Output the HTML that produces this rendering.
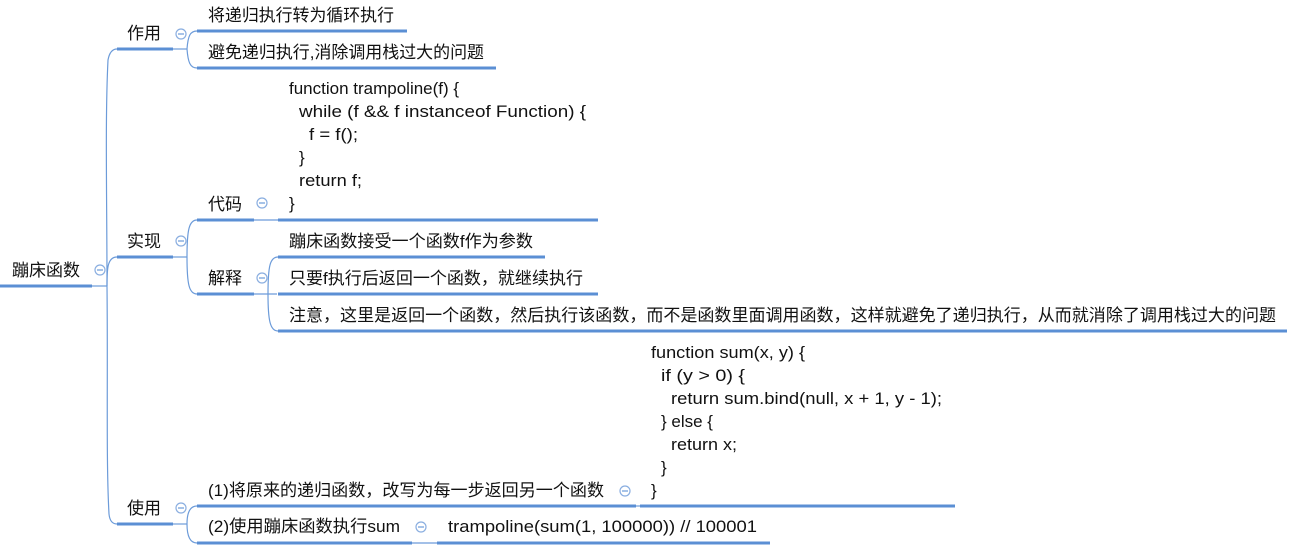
<!DOCTYPE html>
<html><head><meta charset="utf-8"><style>
html,body{margin:0;padding:0;background:#fff;}
svg{display:block;}
text{font-family:"Liberation Sans","Noto Sans CJK SC",sans-serif;font-size:17px;fill:#111;}
.t{stroke:#5b8fd4;stroke-width:3;fill:none;}
.n{stroke:#6c9bd9;stroke-width:1.2;fill:none;}
.c{stroke:#8aaee0;stroke-width:1.2;fill:#fff;}
</style></head><body>
<svg width="1311" height="549" xmlns="http://www.w3.org/2000/svg">
<line class="t" x1="0" y1="286" x2="92" y2="286"/>
<line class="n" x1="92" y1="286" x2="107" y2="286"/>
<text x="12" y="276" textLength="68" lengthAdjust="spacingAndGlyphs">蹦床函数</text>
<circle class="c" cx="100" cy="270" r="5"/><line class="n" x1="97" y1="270" x2="103" y2="270"/>
<path class="n" d="M107 286 C107 200 105 120 108 60 Q110 49 117 49"/>
<path class="n" d="M107 286 C107 270 107 257 117 257"/>
<path class="n" d="M107 286 C108 380 106 460 109 514 Q110 524 117 524"/>
<line class="t" x1="117" y1="49" x2="173" y2="49"/>
<line class="n" x1="173" y1="49" x2="187" y2="49"/>
<text x="127" y="39" textLength="34" lengthAdjust="spacingAndGlyphs">作用</text>
<circle class="c" cx="181" cy="34" r="5"/><line class="n" x1="178" y1="34" x2="184" y2="34"/>
<path class="n" d="M187 49 C188 36 190 31 197 31"/>
<path class="n" d="M187 49 C188 62 190 68 197 68"/>
<line class="t" x1="197" y1="31" x2="407" y2="31"/>
<line class="t" x1="197" y1="68" x2="496" y2="68"/>
<text x="208" y="21" textLength="186" lengthAdjust="spacingAndGlyphs">将递归执行转为循环执行</text>
<text x="208" y="58" textLength="276" lengthAdjust="spacingAndGlyphs">避免递归执行,消除调用栈过大的问题</text>
<line class="t" x1="117" y1="257" x2="173" y2="257"/>
<line class="n" x1="173" y1="257" x2="187" y2="257"/>
<text x="127" y="247" textLength="34" lengthAdjust="spacingAndGlyphs">实现</text>
<circle class="c" cx="181" cy="241" r="5"/><line class="n" x1="178" y1="241" x2="184" y2="241"/>
<path class="n" d="M187 257 C187 230 189 220 197 220"/>
<path class="n" d="M187 257 C187 284 189 294 197 294"/>
<line class="t" x1="197" y1="220" x2="254" y2="220"/>
<line class="n" x1="254" y1="220" x2="278" y2="220"/>
<line class="t" x1="278" y1="220" x2="598" y2="220"/>
<text x="208" y="210" textLength="34" lengthAdjust="spacingAndGlyphs">代码</text>
<circle class="c" cx="262" cy="203" r="5"/><line class="n" x1="259" y1="203" x2="265" y2="203"/>
<text x="289" y="94">function trampoline(f) {</text>
<text x="299" y="117" textLength="287" lengthAdjust="spacingAndGlyphs">while (f &amp;&amp; f instanceof Function) {</text>
<text x="309" y="140" textLength="49" lengthAdjust="spacingAndGlyphs">f = f();</text>
<text x="299" y="163">}</text>
<text x="299" y="186" textLength="63" lengthAdjust="spacingAndGlyphs">return f;</text>
<text x="289" y="209">}</text>
<line class="t" x1="197" y1="294" x2="254" y2="294"/>
<line class="n" x1="254" y1="294" x2="277" y2="294"/>
<text x="208" y="284" textLength="34" lengthAdjust="spacingAndGlyphs">解释</text>
<circle class="c" cx="262" cy="278" r="5"/><line class="n" x1="259" y1="278" x2="265" y2="278"/>
<path class="n" d="M268 294 C268 266 270 257 278 257"/>
<path class="n" d="M268 294 C268 320 270 331 278 331"/>
<line class="t" x1="278" y1="257" x2="545" y2="257"/>
<line class="t" x1="278" y1="294" x2="598" y2="294"/>
<line class="t" x1="278" y1="331" x2="1287" y2="331"/>
<text x="289" y="247" textLength="244" lengthAdjust="spacingAndGlyphs">蹦床函数接受一个函数f作为参数</text>
<text x="289" y="284" textLength="294" lengthAdjust="spacingAndGlyphs">只要f执行后返回一个函数，就继续执行</text>
<text x="289" y="321" textLength="987" lengthAdjust="spacingAndGlyphs">注意，这里是返回一个函数，然后执行该函数，而不是函数里面调用函数，这样就避免了递归执行，从而就消除了调用栈过大的问题</text>
<line class="t" x1="117" y1="524" x2="173" y2="524"/>
<line class="n" x1="173" y1="524" x2="187" y2="524"/>
<text x="127" y="514" textLength="34" lengthAdjust="spacingAndGlyphs">使用</text>
<circle class="c" cx="181" cy="508" r="5"/><line class="n" x1="178" y1="508" x2="184" y2="508"/>
<path class="n" d="M187 524 C187 512 190 506 197 506"/>
<path class="n" d="M187 524 C187 536 190 543 197 543"/>
<line class="t" x1="197" y1="506" x2="636" y2="506"/>
<line class="n" x1="636" y1="506" x2="640" y2="506"/>
<line class="t" x1="640" y1="506" x2="955" y2="506"/>
<text x="208" y="496" textLength="396" lengthAdjust="spacingAndGlyphs">(1)将原来的递归函数，改写为每一步返回另一个函数</text>
<circle class="c" cx="625" cy="491" r="5"/><line class="n" x1="622" y1="491" x2="628" y2="491"/>
<text x="651" y="358" textLength="154" lengthAdjust="spacingAndGlyphs">function sum(x, y) {</text>
<text x="661" y="381" textLength="84" lengthAdjust="spacingAndGlyphs">if (y &gt; 0) {</text>
<text x="671" y="404" textLength="271" lengthAdjust="spacingAndGlyphs">return sum.bind(null, x + 1, y - 1);</text>
<text x="661" y="427">} else {</text>
<text x="671" y="450" textLength="66" lengthAdjust="spacingAndGlyphs">return x;</text>
<text x="661" y="473">}</text>
<text x="651" y="496">}</text>
<line class="t" x1="197" y1="543" x2="412" y2="543"/>
<line class="n" x1="412" y1="543" x2="437" y2="543"/>
<line class="t" x1="437" y1="543" x2="770" y2="543"/>
<text x="208" y="532" textLength="192" lengthAdjust="spacingAndGlyphs">(2)使用蹦床函数执行sum</text>
<circle class="c" cx="421" cy="527" r="5"/><line class="n" x1="418" y1="527" x2="424" y2="527"/>
<text x="448" y="532" textLength="309" lengthAdjust="spacingAndGlyphs">trampoline(sum(1, 100000)) // 100001</text>
</svg>
</body></html>
